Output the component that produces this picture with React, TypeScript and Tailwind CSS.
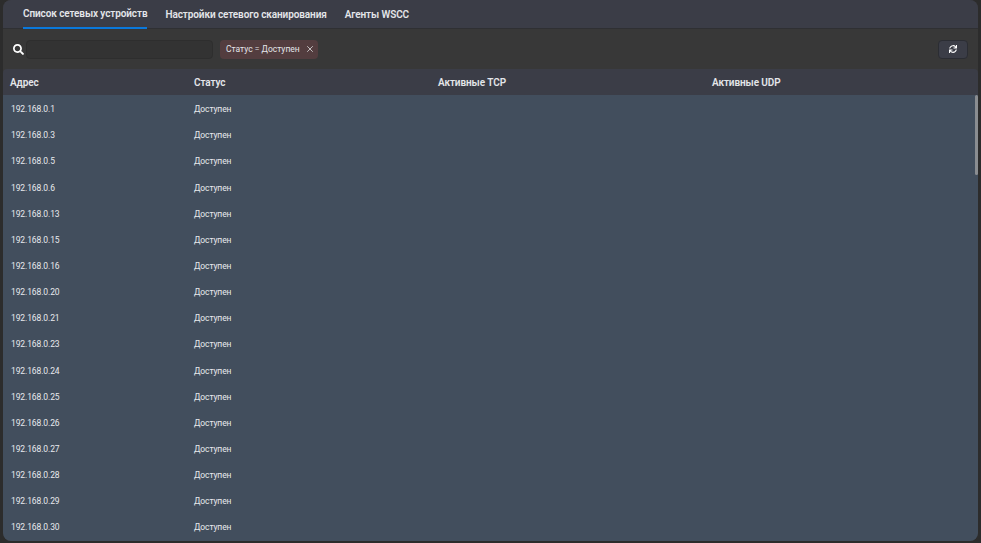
import { FaSearch, FaSync } from "react-icons/fa";
import { X } from "lucide-react";

const addresses = [1, 3, 5, 6, 13, 15, 16, 20, 21, 23, 24, 25, 26, 27, 28, 29, 30];

const tabs = ["Настройки сетевого сканирования", "Агенты WSCC"];

export default function App() {
  return (
    <div className="h-[543px] w-[981px] overflow-hidden bg-[#2c2c2c] pr-[3px] pb-[2px] pl-[3px] font-['Roboto',sans-serif] text-[#e4e6ea]">
      <div className="flex h-full flex-col overflow-hidden rounded-lg bg-[#383838]">
        <div className="flex h-[29px] shrink-0 gap-[18px] border-b border-[#2f3033] bg-[#3b3d47] pl-5 text-[10px] font-semibold tracking-[-0.1px]">
          <div className="flex h-[29px] items-center border-b-2 border-[#0a78dc]">Список сетевых устройств</div>
          {tabs.map((tab) => (
            <div key={tab} className="flex h-[29px] items-center">{tab}</div>
          ))}
        </div>

        <div className="flex h-[40px] shrink-0 items-center pr-[10px] pl-[10px]">
          <FaSearch className="h-[11px] w-[11px] text-white" />
          <div className="ml-[2px] h-[19px] w-[187px] rounded border border-[#2e2e2e] bg-[#333333]" />
          <div className="ml-[7px] flex h-[19px] w-[98px] items-center rounded bg-[#533d3f] pl-[6px] text-[8.5px] whitespace-nowrap">
            <span>Статус = Доступен</span>
            <X className="ml-[5px] h-[10px] w-[10px] shrink-0 text-[#d8d8d8]" />
          </div>
          <button className="ml-auto flex h-[19px] w-[30px] items-center justify-center rounded border border-[#2b2d33] bg-[#3b3d47]">
            <FaSync className="h-[8px] w-[8px] text-white" />
          </button>
        </div>

        <div className="relative min-h-0 flex-1 overflow-hidden rounded-t">
          <div className="grid h-[26px] grid-cols-[184px_244px_274px_1fr] items-center bg-[#3b3d47] pl-[7px] text-[10px] font-semibold tracking-[-0.1px]">
            <div>Адрес</div>
            <div>Статус</div>
            <div>Активные TCP</div>
            <div>Активные UDP</div>
          </div>
          <div className="h-full bg-[#424e5d] pt-[1.5px] text-[8.5px] tracking-[-0.1px]">
            {addresses.map((n) => (
              <div key={n} className="grid h-[26.15px] grid-cols-[183px_1fr] items-center pl-[8px] text-[#e8eaed]">
                <div>192.168.0.{n}</div>
                <div>Доступен</div>
              </div>
            ))}
          </div>
          <div className="absolute top-[26px] right-0 h-[80px] w-[3px] rounded-sm bg-[#8a8d91]" />
        </div>
      </div>
    </div>
  );
}
